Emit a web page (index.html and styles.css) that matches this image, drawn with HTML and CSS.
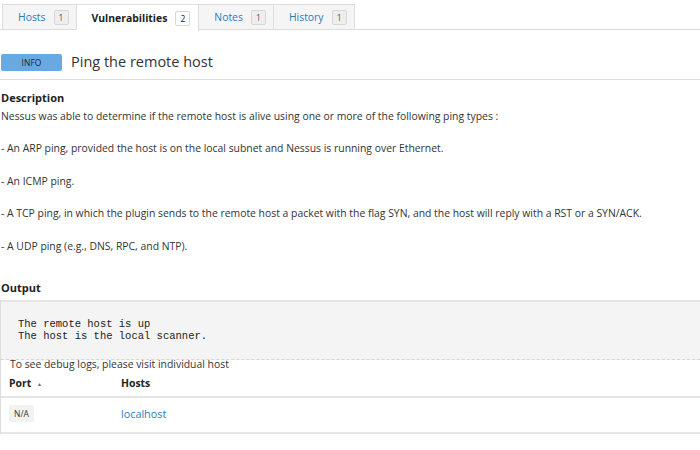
FILE: index.html
```html
<!DOCTYPE html>
<html lang="en">
<head>
    <meta charset="UTF-8">
    <title>Ping the remote host</title>
    <link rel="stylesheet" href="styles.css">
</head>
<body>

    <ul class="tabs">
        <li class="tab"><a href="#">Hosts</a><span class="count">1</span></li>
        <li class="tab active"><a href="#">Vulnerabilities</a><span class="count">2</span></li>
        <li class="tab"><a href="#">Notes</a><span class="count">1</span></li>
        <li class="tab"><a href="#">History</a><span class="count">1</span></li>
    </ul>

    <div class="plugin-header">
        <span class="severity info">INFO</span>
        <h2 class="plugin-name">Ping the remote host</h2>
    </div>

    <h3 class="section-title">Description</h3>
    <div class="description">Nessus was able to determine if the remote host is alive using one or more of the following ping types :

- An ARP ping, provided the host is on the local subnet and Nessus is running over Ethernet.

- An ICMP ping.

- A TCP ping, in which the plugin sends to the remote host a packet with the flag SYN, and the host will reply with a RST or a SYN/ACK.

- A UDP ping (e.g., DNS, RPC, and NTP).</div>

    <h3 class="section-title output-title">Output</h3>
    <div class="output-box">
        <pre class="plugin-output">The remote host is up
The host is the local scanner.</pre>
        <div class="output-hosts">
            <p class="debug-note">To see debug logs, please visit individual host</p>
            <table class="hosts-table">
                <thead>
                    <tr>
                        <th class="port-col">Port <span class="sort">&#9650;</span></th>
                        <th>Hosts</th>
                    </tr>
                </thead>
                <tbody>
                    <tr>
                        <td><span class="port">N/A</span></td>
                        <td><a href="#">localhost</a></td>
                    </tr>
                </tbody>
            </table>
        </div>
    </div>

</body>
</html>
```

FILE: styles.css
```css
body {
    font-family: "Open Sans", Arial, sans-serif;
    font-size: 10.4px;
    color: #333;
    margin: 0;
    background-color: #fff;
}
a {
    color: #2a7bbd;
    text-decoration: none;
}

/* tab strip */
.tabs {
    list-style: none;
    margin: 0;
    padding: 4px 0 0 2px;
    display: flex;
    border-bottom: 1px solid #ddd;
    height: 25px;
}
.tab {
    display: flex;
    align-items: center;
    padding: 0 7px 0 15px;
    gap: 8px;
    background-color: #f5f5f5;
    border: 1px solid #ddd;
    border-bottom: none;
    border-left: none;
    font-size: 10.4px;
}
.tab:first-child {
    border-left: 1px solid #ddd;
}
.tab.active {
    background-color: #fff;
    height: 26px;
    padding-right: 8px;
}
.tab.active a {
    color: #222;
    font-weight: bold;
}
.count {
    width: 13px;
    height: 13px;
    line-height: 13px;
    text-align: center;
    font-size: 8.5px;
    color: #555;
    background-color: #eee;
    border: 1px solid #d6d6d6;
    border-radius: 2px;
}
.tab.active .count {
    background-color: #fff;
    color: #222;
}

/* plugin title */
.plugin-header {
    display: flex;
    align-items: center;
    gap: 9px;
    margin-top: 21px;
    padding: 0 0 6px 1px;
    border-bottom: 1px solid #ddd;
}
.severity {
    width: 61px;
    height: 17px;
    line-height: 17px;
    text-align: center;
    border-radius: 2px;
    font-size: 8.5px;
    color: #223;
}
.info {
    background-color: #67a9e0;
}
.plugin-name {
    margin: 0;
    font-size: 14.5px;
    line-height: 22px;
    font-weight: normal;
    color: #333;
}

/* description + output */
.section-title {
    margin: 10px 0 0 1px;
    font-size: 11px;
    line-height: 16px;
    font-weight: bold;
    color: #222;
}
.description {
    white-space: pre-wrap;
    line-height: 16.2px;
    margin: 2px 0 0 1px;
}
.output-title {
    margin-top: 26px;
}
.output-box {
    margin-top: 4px;
    border-left: 1px solid #ddd;
}
.plugin-output {
    margin: 0;
    padding: 16px 17px 17px;
    background-color: #f4f4f4;
    border-top: 2px solid #e6e6e6;
    border-bottom: 1px dashed #d6d6d6;
    font-family: "Courier New", "Liberation Mono", monospace;
    font-size: 10.5px;
    line-height: 12px;
    color: #222;
}
.debug-note {
    margin: 0;
    padding: 0 0 0 9px;
    line-height: 9px;
}
.hosts-table {
    width: 100%;
    border-collapse: collapse;
}
.hosts-table th {
    text-align: left;
    font-weight: bold;
    color: #222;
    padding: 7px 8px 6px;
    border-bottom: 2px solid #e6e6e6;
}
.hosts-table th.port-col {
    width: 96px;
}
.sort {
    font-size: 5px;
    color: #666;
    vertical-align: middle;
    margin-left: 3px;
}
.hosts-table td {
    padding: 7px 8px 10px;
    border-bottom: 2px solid #e6e6e6;
    font-size: 10.8px;
}
.port {
    display: inline-block;
    font-size: 8.5px;
    background-color: #f2f2f2;
    border-radius: 2px;
    padding: 3px 5px;
    color: #333;
}
```
